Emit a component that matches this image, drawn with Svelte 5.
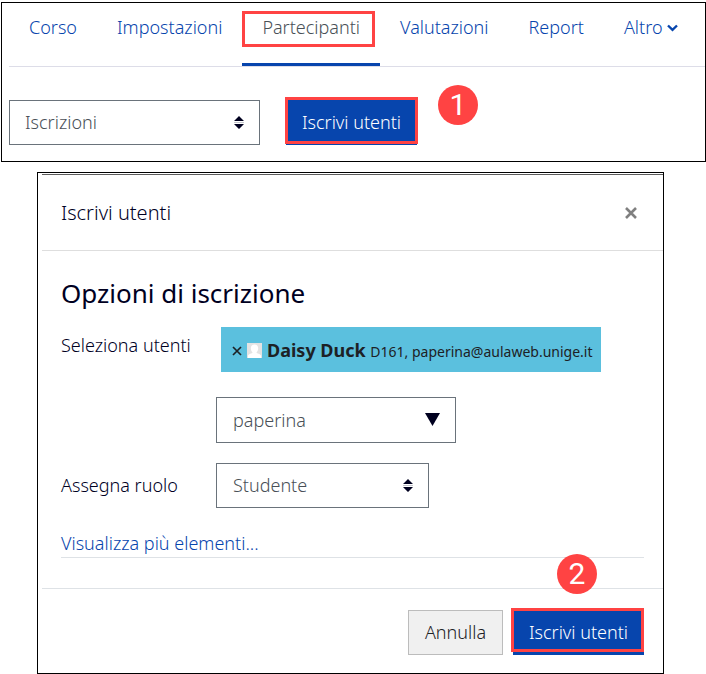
<script>
  const tabs = ['Corso', 'Impostazioni', 'Partecipanti', 'Valutazioni', 'Report', 'Altro'];
  let active = $state('Partecipanti');
  let query = $state('paperina');
</script>

{#snippet sortArrows()}
  <svg class="arrows" width="10" height="13" viewBox="0 0 10 13" aria-hidden="true">
    <path d="M5 0 10 5H0zM0 8h10L5 13z" fill="#00001f" />
    <path d="M0 6.5h10" stroke="#c4c6cc" />
  </svg>
{/snippet}

<main>
  <section class="panel course">
    <nav>
      {#each tabs as tab}
        <a href="#{tab}" class:active={tab === active} onclick={() => (active = tab)}>
          {tab}
          {#if tab === 'Altro'}
            <svg width="11" height="8" viewBox="0 0 11 8" aria-hidden="true">
              <path d="M1 1.500 5.500 5.800 10 1.500" fill="none" stroke="currentColor" stroke-width="2.4" />
            </svg>
          {/if}
          {#if tab === 'Partecipanti'}<span class="outline"></span>{/if}
        </a>
      {/each}
    </nav>
    <div class="toolbar">
      <div class="field wide">
        <select aria-label="Sezione"><option>Iscrizioni</option></select>
        {@render sortArrows()}
      </div>
      <button class="primary" type="button">Iscrivi utenti<span class="outline"></span></button>
      <span class="step first">1</span>
    </div>
  </section>

  <section class="panel dialog" role="dialog" aria-labelledby="dialog-title">
    <header>
      <h2 id="dialog-title">Iscrivi utenti</h2>
      <button class="close" type="button" aria-label="Chiudi">
        <svg width="12" height="12" viewBox="0 0 12 12" aria-hidden="true">
          <path d="M1 1l10 10M11 1 1 11" stroke="#808080" stroke-width="2.6" />
        </svg>
      </button>
    </header>
    <form onsubmit={(e) => e.preventDefault()}>
      <h3>Opzioni di iscrizione</h3>
      <div class="row">
        <label for="users">Seleziona utenti</label>
        <div class="users">
          <div class="chip">
            <button type="button" aria-label="Rimuovi Daisy Duck">
              <svg width="10" height="10" viewBox="0 0 10 10" aria-hidden="true">
                <path d="M1 1l8 8M9 1 1 9" stroke="#1d2125" stroke-width="1.7" />
              </svg>
            </button>
            <svg width="15" height="15" viewBox="0 0 15 15" aria-hidden="true">
              <path d="M0 0h15v15H0z" fill="#e3e3e3" />
              <path d="M7.500 1.500c2.300 0 3.700 1.600 3.700 3.800 0 1.700-.7 3-1.600 3.900v.8c1.800.5 4 1.200 4.400 2.500V15H1v-2.500c.4-1.300 2.600-2 4.400-2.500v-.8c-.9-.9-1.600-2.200-1.600-3.900 0-2.200 1.400-3.800 3.700-3.800z" fill="#fff" />
            </svg>
            <span><strong>Daisy Duck</strong> <small>D161, paperina@aulaweb.unige.it</small></span>
          </div>
          <div class="field search">
            <input id="users" type="text" bind:value={query} />
            <svg class="arrows" width="15" height="13" viewBox="0 0 15 13" aria-hidden="true">
              <path d="M0 0h15L7.500 13z" fill="#00001f" />
            </svg>
          </div>
        </div>
      </div>
      <div class="row">
        <label for="role">Assegna ruolo</label>
        <div class="field role">
          <select id="role"><option>Studente</option></select>
          {@render sortArrows()}
        </div>
      </div>
      <div class="more"><a href="#more">Visualizza più elementi...</a></div>
    </form>
    <footer>
      <button class="secondary" type="button">Annulla</button>
      <button class="primary" type="button">Iscrivi utenti<span class="outline"></span></button>
      <span class="step second">2</span>
    </footer>
  </section>
</main>

<style>
  :global(body) {
    background: #fff;
  }
  main,
  main * {
    box-sizing: border-box;
  }
  main {
    padding: 2px 0 0 1px;
    font: 300 18px/24px "Noto Sans", "Open Sans", sans-serif;
    color: #00001f;
  }
  .panel {
    border: 1px solid #000;
  }
  a {
    color: #0745ad;
    text-decoration: none;
  }
  h2,
  h3 {
    margin: 0;
  }
  button,
  input,
  select {
    font: inherit;
    margin: 0;
    border-radius: 0;
  }

  .course {
    padding-left: 7px;
  }
  nav {
    display: flex;
    height: 64px;
    border-bottom: 1px solid #dddde8;
  }
  nav a {
    position: relative;
    padding: 12px 20px 0;
    height: 63px;
    white-space: nowrap;
  }
  nav a.active {
    color: #495057;
    border-bottom: 3px solid #0745ad;
  }
  nav svg {
    vertical-align: 2px;
  }
  nav .outline {
    inset: 8px 5px 16px 0;
  }
  .outline {
    position: absolute;
    border: 3px solid #ff4343;
    pointer-events: none;
  }

  .toolbar {
    position: relative;
    display: flex;
    gap: 26px;
    padding: 33px 0 16px;
  }
  .field {
    position: relative;
    height: 45px;
  }
  .field select,
  .field input {
    appearance: none;
    width: 100%;
    height: 100%;
    padding: 0 16px 2px;
    border: 1px solid #6a737b;
    background: #fff;
    color: #495057;
    outline: 0;
  }
  .field input {
    padding-bottom: 0;
  }
  .arrows {
    position: absolute;
    right: 16px;
    top: 16px;
    pointer-events: none;
  }
  .wide {
    width: 251px;
  }
  .wide select {
    padding: 0 15px 2px;
  }
  .search {
    width: 240px;
    height: 46px;
  }
  .role {
    width: 213px;
  }

  .primary,
  .secondary {
    position: relative;
    height: 45px;
    padding: 0 0 2px;
    white-space: nowrap;
  }
  .primary {
    width: 131px;
    border: 0;
    background: #0745ad;
    color: #fff;
  }
  .primary .outline {
    inset: -3px -1px 1px;
  }
  footer .primary .outline {
    inset: -2px 0 3px -2px;
  }
  .secondary {
    width: 95px;
    border: 1px solid #bcbcbc;
    background: #f0f0f0;
    color: #1d2125;
  }
  .step {
    position: absolute;
    width: 40px;
    height: 40px;
    border-radius: 50%;
    background: #ff4343;
    color: #fff;
    font: 400 30px/40px Roboto, sans-serif;
    text-align: center;
  }
  .first {
    left: 429px;
    top: 18px;
  }
  .second {
    right: 66px;
    top: -35px;
  }

  .dialog {
    margin: 10px 42px 0 36px;
    padding: 1px 0 0 4px;
  }
  header {
    display: flex;
    align-items: center;
    justify-content: space-between;
    height: 77px;
    padding: 0 26px 0 19px;
    border-top: 1px solid #5c5c5c;
    border-bottom: 1px solid #dedede;
  }
  h2 {
    font-size: 20px;
    font-weight: 300;
  }
  .close {
    display: flex;
    padding: 0;
    border: 0;
    background: none;
  }
  form {
    padding: 22px 19px 30px;
  }
  h3 {
    margin-bottom: 14px;
    font-size: 26px;
    line-height: 40px;
    font-weight: 400;
  }
  .row {
    display: flex;
    margin-bottom: 20px;
  }
  .row label {
    width: 155px;
    flex: none;
    padding-top: 6px;
  }
  .row label[for="role"] {
    padding-top: 10px;
  }
  .chip {
    display: flex;
    align-items: center;
    gap: 5px;
    height: 45px;
    margin: 0 0 25px 5px;
    padding: 2px 8px 0 11px;
    background: #5bc0de;
    color: #1d2125;
    white-space: nowrap;
  }
  .chip button {
    display: flex;
    padding: 0;
    border: 0;
    background: none;
  }
  strong {
    font-weight: 700;
  }
  small {
    font-size: 14px;
    font-weight: 400;
  }
  .more {
    height: 27px;
    margin-top: 23px;
    border-bottom: 1px solid #dee2e6;
  }
  footer {
    position: relative;
    display: flex;
    justify-content: flex-end;
    gap: 10px;
    padding: 21px 19px 18px;
    border-top: 1px solid #dee2e6;
  }
</style>
